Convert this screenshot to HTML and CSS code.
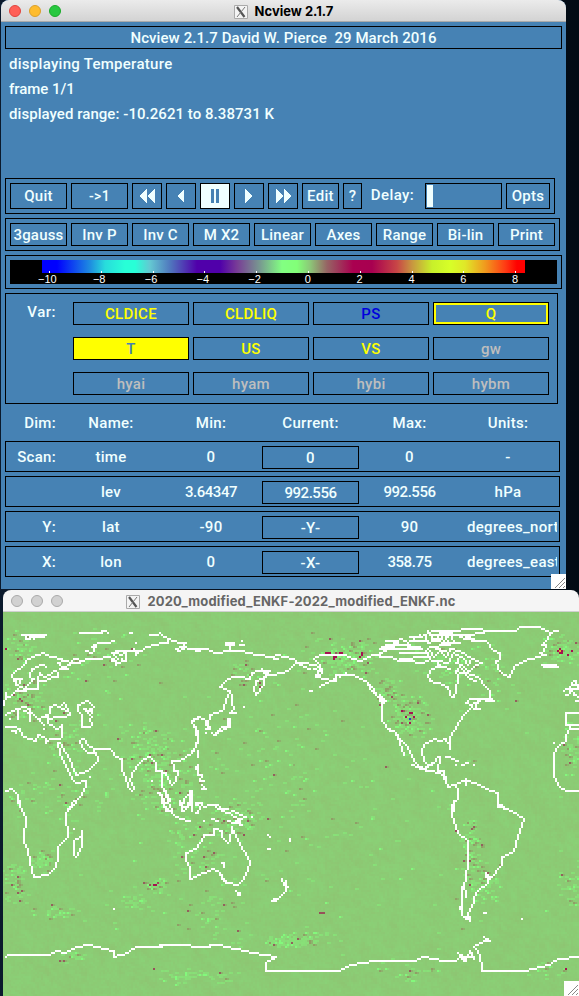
FILE: index.html
```html
<!DOCTYPE html>
<html lang="en">
<head>
<meta charset="utf-8">
<title>Ncview 2.1.7</title>
<link rel="stylesheet" href="styles.css">
</head>
<body>
<svg width="0" height="0" class="defs">
  <symbol id="xicon" viewBox="0 0 14 14"><path d="M.5.5h13v13H.5z" fill="#f4f4f4" stroke="#aaa"/><path d="M3 2l7.5 10" stroke="#555" stroke-width="2.2"/><path d="M11 2L3 12" stroke="#777" stroke-width="1"/></symbol>
  <symbol id="grip" viewBox="0 0 15 15"><path d="M0 0h15v15H0z" fill="#fff"/><path d="M4 14L14 4M8 14l6-6M12 14l2-2" stroke="#888"/></symbol>
</svg>
<main class="window control">
  <header class="titlebar">
    <span class="lights"><i class="red"></i><i class="amber"></i><i class="green"></i></span>
    <span class="caption"><svg><use href="#xicon"/></svg>Ncview 2.1.7</span>
  </header>
  <section class="panel">
    <h1 class="box banner"><span>Ncview 2.1.7 David W. Pierce&nbsp; 29 March 2016</span></h1>
    <div class="status">
      <p class="wide">displaying Temperature</p>
      <p class="tight">frame 1/1</p>
      <p>displayed range: -10.2621 to 8.38731 K</p>
    </div>
    <div class="box playback">
      <button class="w57">Quit</button><button class="w57 small">-&gt;1</button>
      <button class="w30"><svg width="18" height="14" shape-rendering="crispEdges"><path d="M9 0v14L1 7zM17 0v14L9 7z"/></svg></button>
      <button class="w30"><svg width="18" height="14" shape-rendering="crispEdges"><path d="M12 0v14L5 7z"/></svg></button>
      <button class="w30 pressed"><svg width="18" height="14" shape-rendering="crispEdges"><path d="M5 0h3v14H5zM10 0h3v14h-3z"/></svg></button>
      <button class="w30"><svg width="18" height="14" shape-rendering="crispEdges"><path d="M5 0v14l7-7z"/></svg></button>
      <button class="w30"><svg width="18" height="14" shape-rendering="crispEdges"><path d="M2 0v14l8-7zM10 0v14l8-7z"/></svg></button>
      <button class="w37">Edit</button><button class="w19">?</button>
      <span class="delay">Delay:</span><span class="slider"><i></i></span><button class="w44">Opts</button>
    </div>
    <div class="box options">
      <button>3gauss</button><button>Inv P</button><button>Inv C</button><button>M X2</button><button>Linear</button><button>Axes</button><button>Range</button><button>Bi-lin</button><button>Print</button>
    </div>
    <div class="box scale"><div class="scale-bg"><div class="ramp"></div>
      <div class="ticks"><span>−10</span><span>−8</span><span>−6</span><span>−4</span><span>−2</span><span>0</span><span>2</span><span>4</span><span>6</span><span>8</span></div></div></div>
    <div class="box vars">
      <span class="var-label">Var:</span>
      <div class="var-grid">
        <button class="y">CLDICE</button><button class="y">CLDLIQ</button><button class="b">PS</button><button class="y focus">Q</button>
        <button class="on">T</button><button class="y">US</button><button class="y">VS</button><button class="g">gw</button>
        <button class="g">hyai</button><button class="g">hyam</button><button class="g">hybi</button><button class="g">hybm</button>
      </div>
    </div>
    <div class="dims head"><span>Dim:</span><span>Name:</span><span>Min:</span><span>Current:</span><span>Max:</span><span>Units:</span></div>
    <div class="box dims"><span>Scan:</span><span>time</span><span>0</span><button>0</button><span>0</span><span>-</span></div>
    <div class="box dims"><span></span><span>lev</span><span class="n">3.64347</span><button class="n">992.556</button><span class="n">992.556</span><span>hPa</span></div>
    <div class="box dims"><span>Y:</span><span>lat</span><span>-90</span><button>-Y-</button><span>90</span><span class="long">degrees_north</span></div>
    <div class="box dims"><span>X:</span><span>lon</span><span>0</span><button>-X-</button><span class="n">358.75</span><span class="long">degrees_east</span></div>
  </section>
  <svg class="grip"><use href="#grip"/></svg>
</main>
<section class="window plot">
  <header class="titlebar">
    <span class="lights"><i></i><i></i><i></i></span>
    <span class="caption"><svg><use href="#xicon"/></svg>2020_modified_ENKF-2022_modified_ENKF.nc</span>
  </header>
  <canvas id="map" width="288" height="192"></canvas>
  <svg class="grip"><use href="#grip"/></svg>
</section>
<script src="map.js"></script>
</body>
</html>
```
FILE: styles.css
```css
* { box-sizing: border-box; }
body { margin: 0; width: 579px; height: 996px; overflow: hidden; background: linear-gradient(90deg, #0b1a2c 0, #060f1c 50%, #020b15 100%); font: 500 15px/20px Roboto, "Liberation Sans", sans-serif; color: azure; }
.defs { position: absolute; }
.window { position: relative; }
.control { width: 565px; height: 589px; margin-left: 1px; background: #4682b4; border-radius: 8px 8px 0 0; }
.titlebar { position: relative; height: 22px; border-radius: 8px 8px 0 0; background: linear-gradient(#ebebeb, #d3d3d3); border-bottom: 1px solid #aaa; display: flex; align-items: center; justify-content: center; color: #000; }
.lights { position: absolute; left: 8px; top: 5px; display: flex; gap: 8px; }
.lights i { width: 12px; height: 12px; border-radius: 50%; background: #d1d1d1; border: 1px solid #aaa; }
.lights .red { background: #ff5f57; border-color: #e0443e; }
.lights .amber { background: #febc2e; border-color: #dba02b; }
.lights .green { background: #28c840; border-color: #1aab29; }
.caption { display: flex; align-items: center; gap: 7px; font: 700 13px/20px Inter, sans-serif; }
.caption svg { width: 14px; height: 14px; margin-top: 2px; }
.panel { padding: 4px; display: flex; flex-direction: column; align-items: flex-start; gap: 4px; }
.box { border: 1px solid #000; }
.banner { width: 557px; height: 23px; margin: 0; font: inherit; line-height: 22px; text-align: center; white-space: nowrap; letter-spacing: .08px; }
.status { height: 121px; padding: 0 4px; letter-spacing: .05px; }
.status p { margin: 0; height: 25px; line-height: 22px; white-space: nowrap; }
.status .wide { letter-spacing: .28px; }
.status .tight { letter-spacing: -.05px; }
button { height: 23px; padding: 0; border: 1px solid #000; border-radius: 0; background: transparent; color: inherit; font: inherit; line-height: 20px; letter-spacing: .3px; display: flex; justify-content: center; align-items: center; white-space: nowrap; overflow: hidden; }
.playback { width: 550px; height: 36px; padding: 4px; display: flex; gap: 4px; }
.playback button { height: 26px; }
.playback svg { fill: azure; }
.pressed { background: azure; }
.playback .pressed svg { fill: #4682b4; }
.playback .small { font-size: 14px; }
.w57 { width: 57px; } .w30 { width: 30px; } .w37 { width: 37px; } .w19 { width: 19px; } .w44 { width: 44px; }
.delay { width: 55px; padding-right: 2px; text-align: center; line-height: 24px; letter-spacing: .4px; }
.slider { width: 77px; height: 26px; border: 1px solid #000; padding: 1px; }
.slider i { display: block; width: 6px; height: 22px; background: azure; }
.options { width: 555px; height: 33px; padding: 4px; display: grid; grid-template-columns: repeat(9, 57px); gap: 4px; }
.options button { letter-spacing: .2px; }
.scale { width: 557px; height: 34px; padding: 4px; }
.scale-bg { height: 24px; width: 547px; padding-left: 32px; background: #000; }
.ramp { width: 483px; height: 13px; background: linear-gradient(90deg, #00f 0, #00f 15px, #1e8ce0 48px, #28dcdc 63px, #28ffd7 83px, #28ffd7 93px, #64c8d2 108px, #5078be 128px, #5000aa 155px, #5000aa 178px, #783c96 195px, #789a90 218px, #82ff82 240px, #82ff78 255px, #8cc878 268px, #966464 285px, #aa0050 311px, #a80050 330px, #c84646 355px, #c89640 370px, #c8f02a 390px, #d7ff28 408px, #e0e828 423px, #f09a1e 443px, #ff3c14 463px, #f00 475px); }
.ticks { display: flex; width: 519px; margin-left: -19px; font: 11px/12px "Liberation Sans", sans-serif; color: #fff; }
.ticks span { width: 51.8px; flex: none; position: relative; height: 11px; text-align: center; }
.ticks span:nth-child(-n+5) { text-indent: -3px; }
.ticks span::before { content: ""; position: absolute; left: 26px; top: -2px; width: 1px; height: 2px; background: #fff; }
.vars { width: 553px; height: 111px; padding: 8px 8px 8px 0; display: flex; justify-content: space-between; }
.var-label { width: 50px; text-align: right; letter-spacing: .5px; }
.var-grid { display: grid; grid-template-columns: repeat(4, 116px); grid-auto-rows: 23px; gap: 12px 4px; }
.y { color: #ff0; } .b { color: #00d; } .g { color: #bebebe; }
.var-grid .focus { border: 1px solid #000; box-shadow: inset 0 0 0 2px #ff0; }
.on { background: #ff0; color: #4682b4; }
.dims { width: 555px; height: 31px; display: grid; grid-template-columns: 50px 5px 100px 100px 99px 99px 98px; padding: 4px 0; text-align: center; line-height: 22px; letter-spacing: .3px; overflow: hidden; }
.dims > span { height: 23px; }
.dims > :first-child { text-align: right; grid-column: 1; }
.dims > :nth-child(2) { grid-column: 3; }
.dims button { width: 97px; margin: 0 1px; }
.dims .n { letter-spacing: -.45px; }
.dims.head { height: 29px; padding: 4px 1px; }
.dims.head span { line-height: 23px; }
.dims .long { text-align: left; padding-left: 8px; overflow: hidden; white-space: nowrap; }
.grip { position: absolute; right: 0; bottom: 0; width: 15px; height: 15px; }
.plot { width: 576px; height: 406px; margin: 1px 0 0 3px; }
.plot .titlebar { background: #f5f5f5; border-color: #d0d0d0; color: #666; }
.plot .caption { letter-spacing: .17px; }
#map { display: block; width: 576px; height: 384px; image-rendering: pixelated; }
```
FILE: map.js
```javascript
const ctx = document.getElementById('map').getContext('2d');
let seed = 71;
const rnd = () => (seed = (seed * 16807) % 2147483647) / 2147483647;
const cell = (x, y, c) => { ctx.fillStyle = c; ctx.fillRect(x, y, 1, 1); };

// Background field: faint noise correlated with the left and upper neighbours.
let above = new Array(288).fill(0);
for (let y = 0; y < 192; y++) {
  let v = 0;
  for (let x = 0; x < 288; x++) {
    v = v * 0.4 + above[x] * 0.4 + (rnd() - 0.45) * 6;
    above[x] = v;
    cell(x, y, `rgb(${140 - v * 0.3},${202 + v},${116 + v * 0.4})`);
  }
}

// Patches of stronger differences: x, y, radius x, radius y, count, share of dark cells.
const patches = [
  [20,650,16,25,45,.2],[25,700,22,24,60,.3],[65,745,28,35,50,.4],[150,750,35,30,130,.3],[165,790,35,30,100,.4],
  [60,800,60,30,60,.3],[42,862,15,15,45,.5],[15,880,14,28,55,.3],[155,885,16,10,30,.5],[133,900,16,10,25,0],
  [195,845,35,35,60,.3],[235,818,25,18,65,.3],[215,910,45,30,40,.3],[345,655,32,22,110,.2],[335,655,60,25,50,.5],
  [245,675,20,20,30,.5],[408,715,24,22,120,.4],[385,690,14,16,40,.4],[562,648,22,16,70,.3],[450,665,55,25,70,.2],
  [572,750,14,30,45,.2],[470,850,12,45,80,.3],[485,885,18,25,50,.3],[568,885,16,30,40,.2],[288,941,28,6,90,.1],
  [300,938,40,9,35,.4],[70,957,22,8,25,.4],[200,975,50,9,50,.2],[100,660,45,35,40,.4],[280,765,80,65,60,.3],
  [410,970,40,15,25,.2],[500,680,35,30,20,.3],[60,910,35,12,30,.3],[540,970,25,10,20,.3],[290,820,280,160,200,.3]
];
for (const [px, py, rx, ry, n, d] of patches)
  for (let i = 0; i < n; i++) {
    const x = Math.round((px + (rnd() + rnd() - 1) * rx - 3) / 2);
    const y = Math.round((py + (rnd() + rnd() - 1) * ry - 612) / 2);
    const dark = rnd() < d * .7;
    cell(x, y, dark ? (rnd() < .25 ? '#93605c' : '#909e66') : (rnd() < .3 ? '#83f87c' : '#88e078'));
    cell(x + 1, y, dark ? '#8eb26e' : '#88dd77');
  }
const strong = [[333,657],[335,657],[333,659],[327,652],[329,652],[325,653],[339,653],[341,653],[361,653],[362,655],[359,656],
  [559,650],[561,650],[557,650],[559,652],[561,652],[559,648],[567,654],[571,651],[401,711],[411,713],[409,713],[405,716],[409,722],[413,716],
  [155,885],[153,885],[565,969],[5,649]];
const medium = [[391,697],[320,913],[322,913],[324,913],[19,699],[21,701],[259,683],[260,686],[154,969],[470,861],[456,831],[469,885],[157,883],[149,885],[243,834]];
for (const [x, y] of strong) cell((x - 3) >> 1, (y - 612) >> 1, '#a51350');
for (const [x, y] of medium) cell((x - 3) >> 1, (y - 612) >> 1, '#97505a');
cell(203, 53, '#1848c8');
cell(278, 19, '#e8b030');

// Coastlines: origin x, origin y, x scale, y scale, then polylines separated by ";".
const coasts = [
[0, 610, 3, 3, `65,74 140,74;75,80 80,86 90,86 90,80 100,80 100,85 115,82 130,82;238,69 248,69;254,69 272,69;278,69 308,69;308,62 318,62 326,69;387,69 398,69
;10,282 12,270;16,250 20,265 28,262 45,243 60,240 75,243 85,236 112,236 116,210 130,210 150,205 160,200 172,200 172,190 160,182 150,195 130,200 118,190 112,205
;40,213 37,192 50,180 65,168 78,160 80,150 95,140 115,136 130,130 138,134 160,138 180,148 200,152 215,160 200,172 185,170 172,158 190,155
;135,170 125,162 110,172 95,178 90,200 100,205 85,222 75,235 60,228 52,240;50,205 65,205 60,220 50,225 45,210
;182,174 205,174;215,160 240,156;215,150 225,148 245,150 270,144 300,146 325,140 340,145;255,124 275,128 290,112 278,112 300,100 325,98 343,92
;340,145 345,165 360,160 365,145 378,150 378,126 355,122 333,128 345,140 335,150;345,130 365,137;355,145 350,155
;365,124 425,120 435,108 465,102 490,98 505,96 505,84 490,80 480,70 465,72 450,76;505,88 530,92 540,100 555,98 545,108 525,116 535,122 550,118 550,108 570,118 600,122;400,118 405,132 415,130;407,98
;18,316 35,304 55,298 55,325;60,298 72,292 88,298 90,330;70,300 95,310 105,322 118,332 130,346;118,326 130,318 140,316 142,330;28,328 32,326;131,356
;145,330 148,292 165,286 180,290 192,278 200,290 212,312 190,318 165,322 145,328 142,340 160,350 175,356 185,346 186,378 178,386 150,384 140,396 138,386 115,376 110,392 85,385 65,372 62,356 40,352 18,350;35,364 45,360 50,366;178,290 198,300
;235,305 232,285 250,280 262,272 282,290 272,296 275,310 265,300 250,296 262,310;262,310 275,318;275,318 272,330 277,345 272,351 245,352 244,345 245,315 235,305
;172,400 180,430 190,460 205,485 220,512 230,520 258,515 255,530 240,560 220,585 203,600;180,400 195,430 215,465 225,495 245,488 265,480 292,455 294,440 285,430
;262,430 250,415 240,395 250,388 265,405 285,415 280,430 262,430;285,415 330,416 345,440 365,448 365,480 378,500 385,530 397,540 403,530 392,515 398,490 412,462 430,448 450,438 465,460 468,480 485,485 488,530 500,550 505,580 515,600
;268,500;455,512;485,485 500,490 505,505 518,522 530,515 534,485 520,480 522,462 518,450 540,450 575,430 590,410 596,380 592,360 578,340 598,318
;475,550 490,570 495,600;480,548 498,580;500,545 510,575;545,580 560,560 575,545 575,560 560,590;540,575 550,590;590,470 596,495;18,540 38,538 55,555 62,585 66,600`],
[190, 610, 3, 3, `0,118 50,118 78,128 118,122 155,124 200,134 250,140 262,134 310,145 320,160 300,175 275,190 240,196 220,200 220,225 205,250 195,255 190,235 195,210 220,205
;105,102 132,102;105,98 132,98;118,105 120,122;148,104 162,104;155,92;250,146 266,146;320,160 345,158 370,165 390,170 395,190 375,200 385,185;320,155 340,172
;370,175 395,180 390,165 372,148 395,135 430,132 470,135 490,145 515,150 540,142 545,135 600,140;350,172 362,178
;375,195 400,208 435,212;390,230 415,220 435,208 440,192 490,195 525,215 550,235 560,255 585,270 578,280 578,330 600,362;500,202 530,212 545,240 575,270;450,198 465,190;358,242 368,242
;240,180 225,190 205,182 185,190 178,205 150,200 125,202 105,215 92,230 120,245 110,275 100,295 75,308 60,315 55,345 40,325 22,318 8,335 20,360 25,390 20,410 0,435;215,178 225,200;220,185 240,185
;120,245 128,265 124,280;125,285 132,298 120,306 138,308;160,290;118,325 120,348 95,352 70,372 85,366 112,352;114,328 114,346;50,345 58,355 52,338;46,355 58,358;10,345 20,350;48,368;68,366 76,374
;25,420 25,440;25,462 22,490 38,495 30,510 42,515;36,526 48,535 36,536;0,540 5,590;20,580 35,580;68,585 85,585 95,595 115,597`],
[379, 610, 3, 3, `0,126 20,120 10,110 45,110 55,100 20,92 48,94 70,88 85,98 75,105 100,108 120,108;95,78 130,82 150,70 165,64 215,62 240,62 250,56 305,58 325,65 350,62 380,62 410,60 420,52 480,52 505,60 515,68 535,62
;0,140 40,142 60,155 90,150 130,158 145,150;0,118 130,118;60,128 145,128;140,80 145,100 165,95 215,98 240,100;145,70 160,75 200,70 240,75 270,80 290,68 315,68
;160,85 190,85;165,95 180,75 195,90 210,72 225,90;105,92 140,95;150,108 215,104;65,148 145,140;85,100 100,92 120,75;145,64 160,85;190,62 205,90;20,104 90,104;155,76 270,76;240,80 290,92
;145,118 165,140 180,120 200,140 215,118 240,122 260,135 275,140 295,152 308,160 290,165 280,175 265,180 250,165 232,160 240,140 225,130 215,150 200,160 185,150 175,165 195,170 215,178
;140,120 160,150 175,152;170,118 200,120;250,140 265,165 280,145;230,180 245,170 260,190;270,80 290,92 320,95 340,115 360,130 362,145 348,152 355,175 370,190 392,198 402,170 430,158 455,148 480,138 495,125 500,105 490,105 505,85 515,68
;485,130 498,132;488,165 500,170 538,170;494,166 530,166;160,178 148,195 150,212 175,218 205,230 215,255 222,262 228,240 235,200 228,185 255,190 275,205 290,212;160,178 185,170
;255,190 285,195 300,208 315,225 335,245 330,262 345,275 325,270 300,265 270,265 262,280 280,285 300,275 285,298 300,295;320,265 340,266 345,270;280,292 258,310 240,330 232,355 215,380 213,415
;205,400 200,388 180,395 165,388 138,398 128,425 132,450 145,462 165,460 170,448 185,442 178,480 195,485 200,510 205,528 225,525 238,535
;0,270 10,280 10,330 25,355 45,365 60,400 72,432;0,255 15,270;45,365 60,385 75,400 95,425 102,455 125,470 155,485 185,490 200,510;100,462 145,480;140,468 160,465
;198,440 215,440 235,450;230,462;248,462 268,460;284,464;225,525 240,520 255,510 265,515 290,518 320,538 355,550 357,585 370,585 395,600;238,535 235,565 225,575 218,590 225,600;262,508 262,525;370,590 385,598
;600,355 575,355 562,375 562,395 540,405 525,430 525,500 545,530 565,545 600,545;575,350 562,345 560,310 600,310;575,346 600,345;525,398
;555,240 570,232 575,250 560,255;578,218 590,212 595,235 580,235 585,255 600,262;580,222 596,225;600,275 590,275`],
[0, 800, 2.708, 3, `50,0 55,20 70,50 66,120 75,150 82,190 92,230 130,225 150,200 158,165 158,140 184,112 180,40 190,20 202,0;220,92 224,110 222,140 208,170 198,160 202,125 218,110;200,88
;503,158 505,180 515,200 517,238 550,220 578,208 592,215 605,240 620,250 645,255 660,235 675,190 665,160 650,135 640,105 628,78 625,120 618,130 602,108 602,94 580,88 580,104 553,104 545,125 530,145 503,158
;600,188 608,198;605,188;592,210 612,240;640,272 648,285 652,280;642,280 645,285;440,0 445,20 470,45 490,58 515,63;455,0 465,30 450,25;485,10 495,30 490,5;515,0 522,30;500,30 522,5;530,12 545,10 535,40;530,40 542,25;555,18 575,15;485,0 500,10
;590,12 600,30 625,40 645,55 655,72;580,12 590,28;570,15 585,15;600,25 615,25;615,65 640,68 660,50 630,35;640,62 650,75;665,48;682,52;552,62;575,55 590,62;728,105 732,108;785,115 785,122;724,147 732,147
;762,235 770,255 778,258 770,280 758,290 738,302;772,245 772,275;740,296 750,300;308,326
;15,470 25,466 135,464 155,455 180,458 210,442 245,434 310,452 310,470 345,460 370,440 500,432 540,440 595,432 640,445 690,460 745,468 718,490 722,512 885,512 920,510 950,495 1020,482 1125,482 1148,470 1200,480 1235,484 1250,465 1260,480 1275,455 1285,478
;410,440 440,440;540,440 570,440;1308,410 1325,420 1310,425 1285,440 1300,465 1303,512 1425,512 1490,495 1510,475 1568,468;1245,470 1285,470;1240,460 1255,484;1255,478 1275,470
;1230,0 1222,45 1240,100 1265,125 1268,180 1262,240 1252,260 1252,345 1275,360;1258,250 1260,290;1248,320 1252,340;1348,0 1350,20 1375,25 1400,40 1418,55 1405,110 1390,150 1362,170 1360,195 1335,230 1315,225 1320,250 1300,265 1288,280 1278,320 1270,345 1275,360;1316,218 1325,235;1255,350 1275,352;1310,338 1317,338;1412,356`]
];
function line(a, b) {
  let [x, y] = a;
  const dx = Math.abs(b[0] - x), dy = -Math.abs(b[1] - y), sx = x < b[0] ? 1 : -1, sy = y < b[1] ? 1 : -1;
  let e = dx + dy;
  for (;;) {
    cell(x, y, '#fff');
    if (x === b[0] && y === b[1]) return;
    const e2 = 2 * e;
    if (e2 >= dy) { e += dy; x += sx; }
    if (e2 <= dx) { e += dx; y += sy; }
  }
}
for (const [ox, oy, kx, ky, data] of coasts)
  for (const part of data.split(';')) {
    const pts = part.trim().split(/\s+/).map(p => {
      const [x, y] = p.split(',').map(Number);
      return [Math.floor((ox + x / kx - 3) / 2), Math.floor((oy + y / ky - 612) / 2)];
    });
    pts.forEach((p, i) => line(pts[Math.max(0, i - 1)], p));
  }
```
